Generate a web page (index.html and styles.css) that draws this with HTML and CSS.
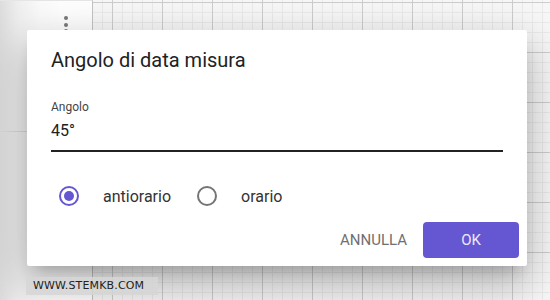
FILE: index.html
```html
<!DOCTYPE html>
<html lang="it">
<head>
<meta charset="utf-8">
<title>Angolo di data misura</title>
<link rel="stylesheet" href="styles.css">
</head>
<body>
<div class="app">
  <div class="side">
    <div class="side-head">
      <div class="kebab"><span></span><span></span><span></span></div>
    </div>
  </div>
  <div class="canvas"></div>

  <div class="dialog">
    <div class="content">
      <div class="title">Angolo di data misura</div>
      <div class="field">
        <div class="field-label">Angolo</div>
        <div class="field-value">45°</div>
      </div>
      <div class="radios">
        <div class="radio checked"><span class="circle"></span><span class="radio-label">antiorario</span></div>
        <div class="radio"><span class="circle"></span><span class="radio-label">orario</span></div>
      </div>
    </div>
    <div class="actions">
      <div class="btn btn-text">ANNULLA</div>
      <div class="btn btn-primary">OK</div>
    </div>
  </div>

  <div class="watermark">WWW.STEMKB.COM</div>
</div>
</body>
</html>
```

FILE: styles.css
```css
html, body {
  margin: 0;
  padding: 0;
}
body {
  font-family: Roboto, "Liberation Sans", sans-serif;
  background: #fff;
}
.app {
  position: relative;
  width: 550px;
  height: 300px;
  display: flex;
  overflow: hidden;
}
.side {
  width: 92px;
  flex: none;
  border-right: 1px solid #c4c4c4;
  border-top: 1px solid #e6e6e6;
  background: linear-gradient(to right, #dcdcdc 0, #efefef 18px, #fbfbfb 40px, #ffffff 60px);
}
.side-head {
  height: 131px;
  border-bottom: 1px solid #dadada;
  box-sizing: border-box;
  padding-top: 15px;
  padding-left: 64px;
}
.kebab {
  display: flex;
  flex-direction: column;
  gap: 2.5px;
}
.kebab span {
  width: 4px;
  height: 4px;
  border-radius: 50%;
  background: #7a7a7a;
}
.canvas {
  flex: 1;
  background-color: #f8f8f8;
  background-image:
    linear-gradient(to right, #cecece 0, #cecece 1.5px, transparent 1.5px),
    linear-gradient(to bottom, #cecece 0, #cecece 1.5px, transparent 1.5px),
    linear-gradient(to right, #ebebeb 0, #ebebeb 1px, transparent 1px),
    linear-gradient(to bottom, #ebebeb 0, #ebebeb 1px, transparent 1px);
  background-size: 50px 50px, 50px 50px, 10px 10px, 10px 10px;
  background-position: 19px 2px, 19px 2px, 19px 2px, 19px 2px;
}
.dialog {
  position: absolute;
  left: 27px;
  top: 30px;
  width: 500px;
  background: #fff;
  border-radius: 2px;
  box-shadow:
    0 11px 15px -7px rgba(0, 0, 0, 0.2),
    0 24px 38px 3px rgba(0, 0, 0, 0.14),
    0 9px 46px 8px rgba(0, 0, 0, 0.12);
}
.content {
  padding: 18px 24px 0;
}
.title {
  font-size: 20px;
  line-height: 24px;
  color: #222;
}
.field {
  margin-top: 27px;
  border-bottom: 2px solid #222;
  padding-bottom: 7px;
}
.field-label {
  font-size: 12px;
  line-height: 16px;
  color: #444;
}
.field-value {
  margin-top: 4px;
  font-size: 16px;
  line-height: 24px;
  color: #212121;
}
.radios {
  margin-top: 26px;
  height: 36px;
  display: flex;
  align-items: center;
}
.radio {
  display: flex;
  align-items: center;
  padding-left: 8px;
  margin-right: 18px;
}
.circle {
  width: 20px;
  height: 20px;
  box-sizing: border-box;
  border: 2px solid #757575;
  border-radius: 50%;
  display: flex;
  align-items: center;
  justify-content: center;
}
.radio.checked .circle {
  border-color: #6557d2;
}
.radio.checked .circle::after {
  content: "";
  width: 10px;
  height: 10px;
  border-radius: 50%;
  background: #6557d2;
}
.radio-label {
  margin-left: 24px;
  font-size: 16px;
  color: #333;
}
.actions {
  display: flex;
  justify-content: flex-end;
  padding: 8px;
}
.btn {
  height: 36px;
  display: flex;
  align-items: center;
  justify-content: center;
  font-size: 15px;
  border-radius: 4px;
}
.btn-text {
  color: #707070;
  padding: 0 8px;
  margin-right: 8px;
}
.btn-primary {
  width: 96px;
  background: #6557d2;
  color: #eceaf9;
}
.watermark {
  position: absolute;
  left: 26px;
  top: 277px;
  width: 132px;
  height: 18px;
  box-sizing: border-box;
  padding-left: 7px;
  background: rgba(214, 214, 214, 0.85);
  font-family: "DejaVu Sans", sans-serif;
  font-size: 11px;
  letter-spacing: 0.15px;
  line-height: 18px;
  color: #222;
}
```
